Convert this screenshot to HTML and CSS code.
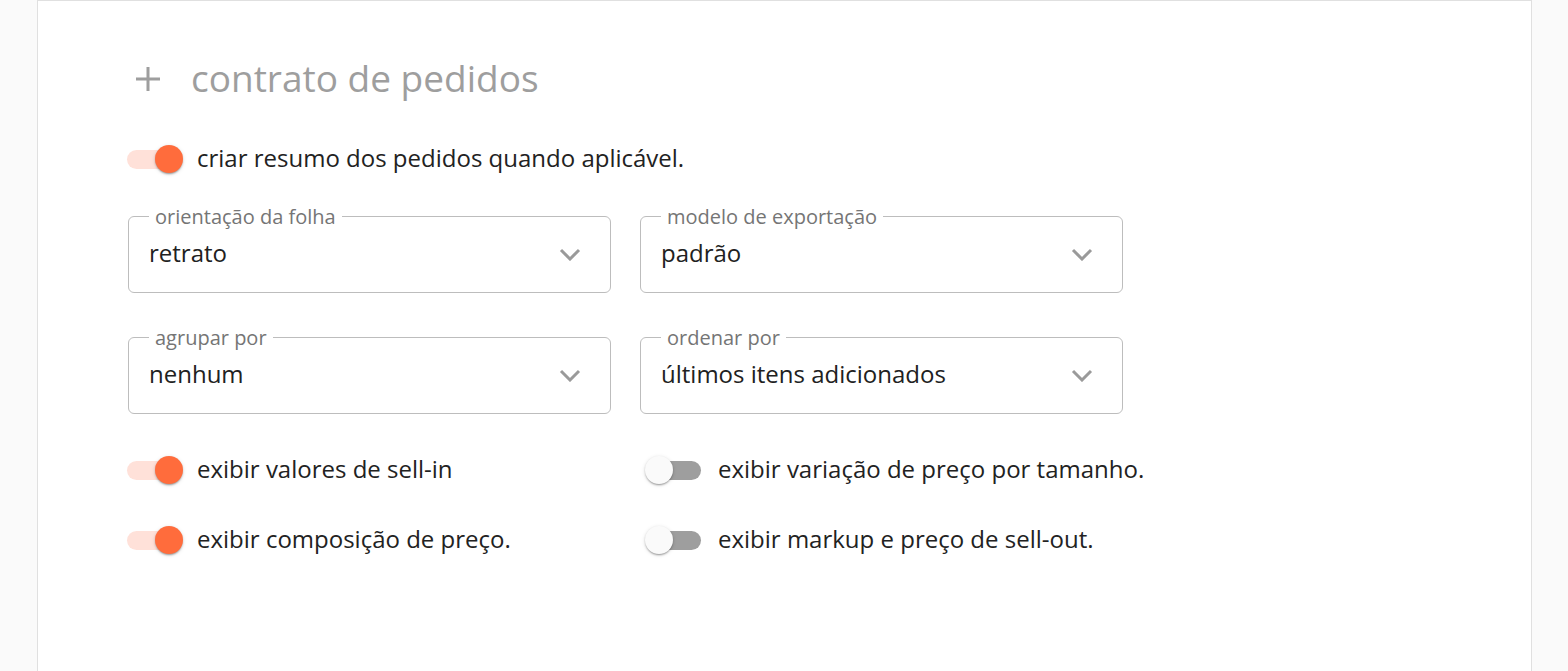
FILE: index.html
```html
<!DOCTYPE html>
<html>
<head>
    <title>Contrato de pedidos</title>
    <link rel="stylesheet" href="styles.css">
</head>
<body>
    <div class="card">
        <div class="section-title">
            <svg class="plus-icon" width="24" height="24" viewBox="0 0 24 24">
                <path d="M12 0v24M0 12h24" stroke="#9e9e9e" stroke-width="3" fill="none"/>
            </svg>
            <span class="title-text">contrato de pedidos</span>
        </div>

        <label class="switch-item first-switch">
            <span class="switch on"><span class="track"></span><span class="thumb"></span></span>
            <span class="switch-label">criar resumo dos pedidos quando aplicável.</span>
        </label>

        <div class="select-grid">
            <div class="select-field">
                <span class="select-label">orientação da folha</span>
                <span class="select-value">retrato</span>
                <svg class="chevron" width="22" height="13" viewBox="0 0 22 13">
                    <path d="M2 2l9 9 9-9" stroke="#9a9a9a" stroke-width="3" fill="none"/>
                </svg>
            </div>
            <div class="select-field">
                <span class="select-label">modelo de exportação</span>
                <span class="select-value">padrão</span>
                <svg class="chevron" width="22" height="13" viewBox="0 0 22 13">
                    <path d="M2 2l9 9 9-9" stroke="#9a9a9a" stroke-width="3" fill="none"/>
                </svg>
            </div>
            <div class="select-field">
                <span class="select-label">agrupar por</span>
                <span class="select-value">nenhum</span>
                <svg class="chevron" width="22" height="13" viewBox="0 0 22 13">
                    <path d="M2 2l9 9 9-9" stroke="#9a9a9a" stroke-width="3" fill="none"/>
                </svg>
            </div>
            <div class="select-field">
                <span class="select-label">ordenar por</span>
                <span class="select-value">últimos itens adicionados</span>
                <svg class="chevron" width="22" height="13" viewBox="0 0 22 13">
                    <path d="M2 2l9 9 9-9" stroke="#9a9a9a" stroke-width="3" fill="none"/>
                </svg>
            </div>
        </div>

        <div class="switch-grid">
            <label class="switch-item">
                <span class="switch on"><span class="track"></span><span class="thumb"></span></span>
                <span class="switch-label">exibir valores de sell-in</span>
            </label>
            <label class="switch-item">
                <span class="switch"><span class="track"></span><span class="thumb"></span></span>
                <span class="switch-label">exibir variação de preço por tamanho.</span>
            </label>
            <label class="switch-item">
                <span class="switch on"><span class="track"></span><span class="thumb"></span></span>
                <span class="switch-label">exibir composição de preço.</span>
            </label>
            <label class="switch-item">
                <span class="switch"><span class="track"></span><span class="thumb"></span></span>
                <span class="switch-label">exibir markup e preço de sell-out.</span>
            </label>
        </div>
    </div>
</body>
</html>
```

FILE: styles.css
```css
body {
    margin: 0;
    font-family: "Open Sans", "Noto Sans", sans-serif;
    background-color: #fafafa;
    color: #212121;
}
.card {
    box-sizing: border-box;
    width: 1495px;
    min-height: 100vh;
    margin-left: 37px;
    padding: 56px 90px 40px 90px;
    background-color: white;
    border: 1px solid #e0e0e0;
    border-bottom: none;
}
.section-title {
    display: flex;
    align-items: center;
    height: 44px;
    font-size: 37px;
    color: #9e9e9e;
}
.title-text {
    padding-bottom: 4px;
}
.plus-icon {
    margin-left: 8px;
    margin-right: 31px;
}
.switch-item {
    display: flex;
    align-items: center;
    gap: 14px;
    height: 28px;
    cursor: pointer;
}
.first-switch {
    margin-top: 44px;
    margin-left: -4px;
}
.switch {
    position: relative;
    display: block;
    width: 59px;
    height: 28px;
    flex-shrink: 0;
}
.track {
    position: absolute;
    left: 3px;
    top: 5px;
    width: 53px;
    height: 19px;
    border-radius: 10px;
    background-color: #9e9e9e;
}
.thumb {
    position: absolute;
    left: 0;
    top: 0;
    width: 28px;
    height: 28px;
    border-radius: 50%;
    background-color: #fafafa;
    box-shadow: 0 2px 2px -1px rgba(0,0,0,0.25), 0 1px 2px rgba(0,0,0,0.14), 0 1px 4px rgba(0,0,0,0.12);
}
.switch.on .track {
    background-color: #ffe1d9;
}
.switch.on .thumb {
    left: 31px;
    background-color: #ff6c3c;
}
.switch-label {
    font-size: 24px;
    padding-bottom: 4px;
    color: #222;
}
.select-grid {
    display: grid;
    grid-template-columns: 483px 483px;
    column-gap: 29px;
    row-gap: 44px;
    margin-top: 43px;
}
.select-field {
    position: relative;
    box-sizing: border-box;
    height: 77px;
    display: flex;
    align-items: center;
    justify-content: space-between;
    padding: 0 29px 0 20px;
    border: 1px solid #bdbdbd;
    border-radius: 6px;
}
.select-label {
    position: absolute;
    left: 20px;
    top: -11px;
    padding: 0 6px;
    background-color: white;
    font-size: 20px;
    line-height: 22px;
    color: #757575;
}
.select-value {
    font-size: 24px;
    padding-bottom: 4px;
    color: #212121;
}
.switch-grid {
    display: grid;
    grid-template-columns: 521px auto;
    row-gap: 42px;
    margin-top: 42px;
    margin-left: -4px;
}
```
